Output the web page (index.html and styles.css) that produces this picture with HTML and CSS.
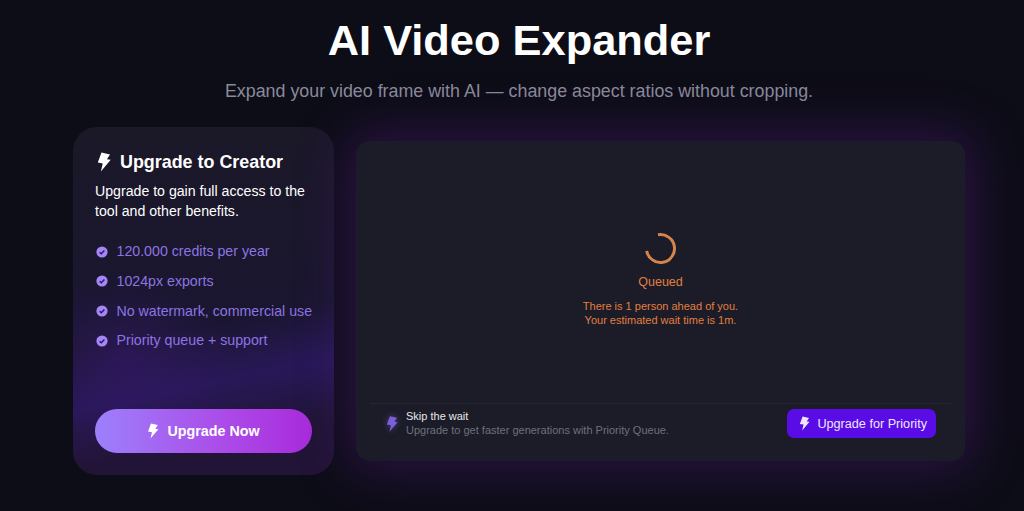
FILE: index.html
```html
<!DOCTYPE html>
<html>
<head>
  <title>AI Video Expander</title>
  <link rel="stylesheet" href="styles.css">
</head>
<body>
  <svg class="defs" width="0" height="0">
    <symbol id="bolt" viewBox="0 0 16 22">
      <path d="M5.2 0.6 L14.6 2.8 L11.2 8 L15.4 8.6 L4.6 21.4 L6.6 12.6 L1.2 11.6 Z"/>
    </symbol>
    <symbol id="check" viewBox="0 0 12 12">
      <circle cx="6" cy="6" r="5.6" fill="#a585f7"/>
      <path d="M3.6 6.2 L5.3 7.8 L8.4 4.5" fill="none" stroke="#2a1a55" stroke-width="1.4"/>
    </symbol>
  </svg>

  <div class="page">
    <h1>AI Video Expander</h1>
    <p class="subtitle">Expand your video frame with AI — change aspect ratios without cropping.</p>

    <div class="content">
      <div class="upgrade-card">
        <h2><svg class="bolt-title"><use href="#bolt"/></svg>Upgrade to Creator</h2>
        <p class="upgrade-text">Upgrade to gain full access to the tool and other benefits.</p>
        <ul class="benefits">
          <li><svg class="check"><use href="#check"/></svg>120.000 credits per year</li>
          <li><svg class="check"><use href="#check"/></svg>1024px exports</li>
          <li><svg class="check"><use href="#check"/></svg>No watermark, commercial use</li>
          <li><svg class="check"><use href="#check"/></svg>Priority queue + support</li>
        </ul>
        <button class="upgrade-btn"><svg class="bolt-btn"><use href="#bolt"/></svg>Upgrade Now</button>
      </div>

      <div class="queue-card">
        <div class="queue-status">
          <div class="spinner"></div>
          <div class="queued">Queued</div>
          <p class="wait">There is 1 person ahead of you.<br>Your estimated wait time is 1m.</p>
        </div>
        <div class="skip-row">
          <svg class="bolt-skip"><use href="#bolt"/></svg>
          <div class="skip-text">
            <div class="skip-title">Skip the wait</div>
            <div class="skip-sub">Upgrade to get faster generations with Priority Queue.</div>
          </div>
          <button class="priority-btn"><svg class="bolt-priority"><use href="#bolt"/></svg>Upgrade for Priority</button>
        </div>
      </div>
    </div>
  </div>
</body>
</html>
```

FILE: styles.css
```css
html, body {
  height: 100%;
}

body {
  margin: 0;
  overflow: hidden;
  background-color: #0d0d17;
  font-family: "Liberation Sans", Arial, sans-serif;
}

.defs {
  display: block;
  height: 0;
}

.page {
  width: 892px;
  margin-left: 73px;
  padding-top: 14px;
}

h1 {
  margin: 0;
  text-align: center;
  color: #fff;
  font-size: 43.4px;
  line-height: 52px;
  font-weight: 700;
}

.subtitle {
  margin: 13px 0 0;
  text-align: center;
  color: #8a8a9a;
  font-size: 17.85px;
  line-height: 24px;
}

.content {
  display: flex;
  align-items: center;
  gap: 22px;
  margin-top: 24px;
}

.upgrade-card {
  box-sizing: border-box;
  width: 261px;
  height: 348px;
  flex: none;
  padding: 22px;
  border-radius: 24px;
  display: flex;
  flex-direction: column;
  color: #fff;
  background:
    radial-gradient(ellipse 110px 80px at 50px 230px, rgba(62, 26, 125, 0.4), rgba(62, 26, 125, 0) 100%),
    linear-gradient(169deg, rgba(50, 26, 120, 0) 56%, rgba(50, 26, 120, 0.55) 71%, rgba(50, 26, 120, 0) 86%),
    linear-gradient(180deg, #1b1828 0%, #1a1630 55%, #221437 100%);
}

h2 {
  display: flex;
  align-items: center;
  margin: 0;
  font-size: 17.9px;
  line-height: 26px;
  font-weight: 700;
}

.bolt-title {
  width: 16px;
  height: 20px;
  margin: 0 8px 0 1px;
  fill: #fff;
}

.upgrade-text {
  margin: 7px 0 0;
  font-size: 14.15px;
  line-height: 19.6px;
}

.benefits {
  list-style: none;
  margin: 20px -4px 0 0;
  padding: 0;
  color: #8c74e2;
  font-size: 14.2px;
}

.benefits li {
  display: flex;
  align-items: center;
  height: 20px;
  margin-bottom: 9.7px;
  white-space: nowrap;
}

.check {
  width: 12px;
  height: 12px;
  margin: 1px 9px 0 0.5px;
}

.upgrade-btn {
  display: flex;
  align-items: center;
  justify-content: center;
  height: 44px;
  margin-top: auto;
  border: 0;
  border-radius: 22px;
  color: #fff;
  font-family: inherit;
  font-size: 14.3px;
  font-weight: 700;
  background: linear-gradient(90deg, #9d80fb 0%, #ab4be8 60%, #a92bdc 100%);
}

.bolt-btn {
  width: 12px;
  height: 16px;
  margin-right: 8px;
  fill: #fff;
}

.queue-card {
  box-sizing: border-box;
  flex: 1;
  height: 320px;
  padding: 0 14px;
  border-radius: 14px;
  display: flex;
  flex-direction: column;
  background-color: #1b1c27;
  box-shadow: 0 0 50px 8px rgba(88, 28, 135, 0.42);
}

.queue-status {
  flex: 1;
  display: flex;
  flex-direction: column;
  align-items: center;
  padding-top: 92px;
  color: #e27f42;
  text-align: center;
}

.spinner {
  box-sizing: border-box;
  width: 31px;
  height: 31px;
  border: 3px solid #d5844c;
  border-top-color: transparent;
  border-radius: 50%;
  transform: rotate(-55deg);
}

.queued {
  margin-top: 10px;
  font-size: 12.5px;
  line-height: 16px;
}

.wait {
  margin: 9px 0 0;
  font-size: 11px;
  line-height: 14px;
}

.skip-row {
  display: flex;
  align-items: center;
  height: 58px;
  padding: 0 15px 18px 16px;
  box-sizing: border-box;
  border-top: 1px solid #262733;
}

.bolt-skip {
  width: 12px;
  height: 18px;
  margin-right: 8px;
  fill: #7a5fd8;
  filter: drop-shadow(0 0 3px rgba(122, 95, 216, 0.6));
}

.skip-text {
  flex: 1;
  padding-bottom: 2px;
  font-size: 11px;
  line-height: 14px;
}

.skip-title {
  color: #e8e8ee;
}

.skip-sub {
  color: #6f707e;
}

.priority-btn {
  display: flex;
  align-items: center;
  height: 29px;
  padding: 0 9px 0 12px;
  border: 0;
  border-radius: 7px;
  color: #eee6ff;
  font-family: inherit;
  font-size: 12.65px;
  background-color: #5a0ce6;
}

.bolt-priority {
  width: 11px;
  height: 15px;
  margin-right: 7px;
  fill: #eee6ff;
}
```
